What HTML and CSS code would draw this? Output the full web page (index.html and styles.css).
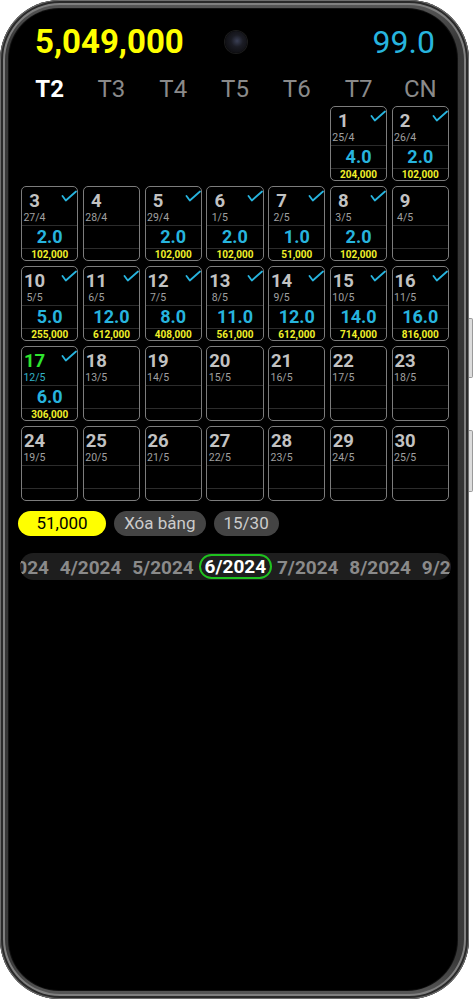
FILE: index.html
```html
<!DOCTYPE html>
<html lang="vi">
<head>
<meta charset="utf-8">
<title>Bảng công</title>
<link rel="stylesheet" href="styles.css">
</head>
<body>
<svg class="defs" width="0" height="0" aria-hidden="true">
  <symbol id="chk" viewBox="0 0 16 12"><path d="M1.5 6 L4.8 10.5 L15 1.5"/></symbol>
</svg>
<div class="phone">
  <div class="side side-vol"></div>
  <div class="side side-pwr"></div>
  <div class="screen">
    <div class="camera"></div>
    <div class="content">
      <div class="hdr">
        <span class="total">5,049,000</span>
        <span class="sum">99.0</span>
      </div>
      <div class="days">
        <div class="on">T2</div><div>T3</div><div>T4</div><div>T5</div><div>T6</div><div>T7</div><div>CN</div>
      </div>
      <div class="grid">
        <div class="cell c6"><div class="top"><div class="dl"><div class="dn">1</div><div class="dd">25/4</div></div><svg class="chk"><use href="#chk"/></svg></div><div class="val">4.0</div><div class="amt">204,000</div></div>
        <div class="cell"><div class="top"><div class="dl"><div class="dn">2</div><div class="dd">26/4</div></div><svg class="chk"><use href="#chk"/></svg></div><div class="val">2.0</div><div class="amt">102,000</div></div>

        <div class="cell"><div class="top"><div class="dl"><div class="dn">3</div><div class="dd">27/4</div></div><svg class="chk"><use href="#chk"/></svg></div><div class="val">2.0</div><div class="amt">102,000</div></div>
        <div class="cell"><div class="top"><div class="dl"><div class="dn">4</div><div class="dd">28/4</div></div></div><div class="val"></div><div class="amt"></div></div>
        <div class="cell"><div class="top"><div class="dl"><div class="dn">5</div><div class="dd">29/4</div></div><svg class="chk"><use href="#chk"/></svg></div><div class="val">2.0</div><div class="amt">102,000</div></div>
        <div class="cell"><div class="top"><div class="dl"><div class="dn">6</div><div class="dd">1/5</div></div><svg class="chk"><use href="#chk"/></svg></div><div class="val">2.0</div><div class="amt">102,000</div></div>
        <div class="cell"><div class="top"><div class="dl"><div class="dn">7</div><div class="dd">2/5</div></div><svg class="chk"><use href="#chk"/></svg></div><div class="val">1.0</div><div class="amt">51,000</div></div>
        <div class="cell"><div class="top"><div class="dl"><div class="dn">8</div><div class="dd">3/5</div></div><svg class="chk"><use href="#chk"/></svg></div><div class="val">2.0</div><div class="amt">102,000</div></div>
        <div class="cell"><div class="top"><div class="dl"><div class="dn">9</div><div class="dd">4/5</div></div></div><div class="val"></div><div class="amt"></div></div>

        <div class="cell"><div class="top"><div class="dl"><div class="dn">10</div><div class="dd">5/5</div></div><svg class="chk"><use href="#chk"/></svg></div><div class="val">5.0</div><div class="amt">255,000</div></div>
        <div class="cell"><div class="top"><div class="dl"><div class="dn">11</div><div class="dd">6/5</div></div><svg class="chk"><use href="#chk"/></svg></div><div class="val">12.0</div><div class="amt">612,000</div></div>
        <div class="cell"><div class="top"><div class="dl"><div class="dn">12</div><div class="dd">7/5</div></div><svg class="chk"><use href="#chk"/></svg></div><div class="val">8.0</div><div class="amt">408,000</div></div>
        <div class="cell"><div class="top"><div class="dl"><div class="dn">13</div><div class="dd">8/5</div></div><svg class="chk"><use href="#chk"/></svg></div><div class="val">11.0</div><div class="amt">561,000</div></div>
        <div class="cell"><div class="top"><div class="dl"><div class="dn">14</div><div class="dd">9/5</div></div><svg class="chk"><use href="#chk"/></svg></div><div class="val">12.0</div><div class="amt">612,000</div></div>
        <div class="cell"><div class="top"><div class="dl"><div class="dn">15</div><div class="dd">10/5</div></div><svg class="chk"><use href="#chk"/></svg></div><div class="val">14.0</div><div class="amt">714,000</div></div>
        <div class="cell"><div class="top"><div class="dl"><div class="dn">16</div><div class="dd">11/5</div></div><svg class="chk"><use href="#chk"/></svg></div><div class="val">16.0</div><div class="amt">816,000</div></div>

        <div class="cell today"><div class="top"><div class="dl"><div class="dn">17</div><div class="dd">12/5</div></div><svg class="chk"><use href="#chk"/></svg></div><div class="val">6.0</div><div class="amt">306,000</div></div>
        <div class="cell"><div class="top"><div class="dl"><div class="dn">18</div><div class="dd">13/5</div></div></div><div class="val"></div><div class="amt"></div></div>
        <div class="cell"><div class="top"><div class="dl"><div class="dn">19</div><div class="dd">14/5</div></div></div><div class="val"></div><div class="amt"></div></div>
        <div class="cell"><div class="top"><div class="dl"><div class="dn">20</div><div class="dd">15/5</div></div></div><div class="val"></div><div class="amt"></div></div>
        <div class="cell"><div class="top"><div class="dl"><div class="dn">21</div><div class="dd">16/5</div></div></div><div class="val"></div><div class="amt"></div></div>
        <div class="cell"><div class="top"><div class="dl"><div class="dn">22</div><div class="dd">17/5</div></div></div><div class="val"></div><div class="amt"></div></div>
        <div class="cell"><div class="top"><div class="dl"><div class="dn">23</div><div class="dd">18/5</div></div></div><div class="val"></div><div class="amt"></div></div>

        <div class="cell"><div class="top"><div class="dl"><div class="dn">24</div><div class="dd">19/5</div></div></div><div class="val"></div><div class="amt"></div></div>
        <div class="cell"><div class="top"><div class="dl"><div class="dn">25</div><div class="dd">20/5</div></div></div><div class="val"></div><div class="amt"></div></div>
        <div class="cell"><div class="top"><div class="dl"><div class="dn">26</div><div class="dd">21/5</div></div></div><div class="val"></div><div class="amt"></div></div>
        <div class="cell"><div class="top"><div class="dl"><div class="dn">27</div><div class="dd">22/5</div></div></div><div class="val"></div><div class="amt"></div></div>
        <div class="cell"><div class="top"><div class="dl"><div class="dn">28</div><div class="dd">23/5</div></div></div><div class="val"></div><div class="amt"></div></div>
        <div class="cell"><div class="top"><div class="dl"><div class="dn">29</div><div class="dd">24/5</div></div></div><div class="val"></div><div class="amt"></div></div>
        <div class="cell"><div class="top"><div class="dl"><div class="dn">30</div><div class="dd">25/5</div></div></div><div class="val"></div><div class="amt"></div></div>
      </div>
      <div class="actions">
        <span class="pill pill-rate">51,000</span>
        <span class="pill">Xóa bảng</span>
        <span class="pill">15/30</span>
      </div>
      <div class="months">
        <div class="track">
          <div class="m">3/2024</div>
          <div class="m">4/2024</div>
          <div class="m">5/2024</div>
          <div class="m sel">6/2024</div>
          <div class="m">7/2024</div>
          <div class="m">8/2024</div>
          <div class="m">9/2024</div>
        </div>
      </div>
    </div>
  </div>
</div>
</body>
</html>
```

FILE: styles.css
```css
html, body {
  margin: 0;
  padding: 0;
  background: #ffffff;
}
body {
  font-family: Roboto, "Liberation Sans", sans-serif;
  width: 473px;
  height: 1000px;
  overflow: hidden;
}
.defs {
  position: absolute;
  width: 0;
  height: 0;
}
.phone {
  position: relative;
  width: 469px;
  height: 999px;
  box-sizing: border-box;
  padding: 9px 12px 9px 9px;
  border-radius: 60px;
  background: linear-gradient(180deg, #5a5a5a 0%, #3a3a3a 4%, #333 50%, #3a3a3a 96%, #5a5a5a 100%);
  box-shadow: inset 0 0 0 1px #6e6e6e, inset 0 0 0 3px #2a2a2a, inset 0 0 0 5px #808080;
}
.side {
  position: absolute;
  right: -4px;
  width: 3px;
  background: #dcdcdc;
  border: 1px solid #9a9a9a;
  border-left: none;
  border-radius: 0 2px 2px 0;
}
.side-vol {
  top: 318px;
  height: 58px;
}
.side-pwr {
  top: 430px;
  height: 60px;
}
.screen {
  position: relative;
  height: 100%;
  background: #000;
  border-radius: 50px;
  overflow: hidden;
  box-shadow: 0 0 0 1px #111;
}
.camera {
  position: absolute;
  left: 216px;
  top: 22px;
  width: 22px;
  height: 22px;
  border-radius: 50%;
  background: radial-gradient(circle at 55% 45%, #3a3f55 0, #1b1c24 35%, #101014 70%);
  box-shadow: 0 0 0 1px #1c1c1c;
}
.content {
  margin-left: 12px;
  width: 428px;
  padding-top: 13px;
}
.hdr {
  display: flex;
  justify-content: space-between;
  align-items: baseline;
  height: 40px;
  line-height: 40px;
  padding: 0 14px;
}
.total {
  font-size: 33px;
  font-weight: 700;
  color: #ffff00;
}
.sum {
  font-size: 32px;
  color: #27b4de;
}
.days {
  display: grid;
  grid-template-columns: repeat(7, 1fr);
  column-gap: 4.4px;
  margin-top: 12.5px;
  font-size: 24px;
  line-height: 28px;
  color: #8a8a8a;
  text-align: center;
}
.days .on {
  color: #ffffff;
  font-weight: 700;
}
.grid {
  display: grid;
  grid-template-columns: repeat(7, 1fr);
  grid-auto-rows: 75px;
  column-gap: 4.4px;
  row-gap: 5px;
  margin-top: 3.5px;
}
.cell {
  display: flex;
  flex-direction: column;
  box-sizing: border-box;
  border: 1px solid #7c7c7c;
  border-radius: 5px;
  overflow: hidden;
}
.c6 {
  grid-column-start: 6;
}
.top {
  height: 38px;
  box-sizing: border-box;
  padding-top: 4px;
  display: flex;
  justify-content: space-between;
  align-items: flex-start;
}
.dl {
  width: 25px;
  text-align: center;
}
.dn {
  font-size: 18.5px;
  line-height: 20px;
  font-weight: 700;
  color: #c2c2c2;
}
.dd {
  font-size: 10.5px;
  line-height: 14px;
  color: #a0a0a0;
}
.chk {
  width: 16px;
  height: 12px;
  margin-top: -1px;
  fill: none;
  stroke: #27b4de;
  stroke-width: 1.8;
  stroke-linecap: round;
  stroke-linejoin: round;
}
.val {
  height: 22px;
  border-top: 1px solid #2c2c2c;
  text-align: center;
  font-size: 18px;
  line-height: 22px;
  font-weight: 700;
  color: #27b4de;
}
.amt {
  height: 11px;
  border-top: 1px solid #2c2c2c;
  text-align: center;
  font-size: 10px;
  line-height: 11px;
  font-weight: 700;
  color: #f0f02a;
}
.today .dn {
  color: #2ee52e;
}
.today .dd {
  color: #33b3c9;
}
.actions {
  display: flex;
  gap: 8px;
  margin-top: 10px;
  margin-left: -3px;
}
.pill {
  height: 25px;
  line-height: 25px;
  padding: 0 10px;
  border-radius: 13px;
  background: #444444;
  color: #cccccc;
  font-size: 17px;
}
.pill-rate {
  background: #ffff00;
  color: #000;
  padding: 0 18.5px;
}
.months {
  margin-top: 17px;
  margin-left: -1px;
  width: 431px;
  height: 27px;
  border-radius: 14px;
  background: #1e1e1e;
  overflow: hidden;
}
.track {
  display: flex;
  margin-left: -38px;
}
.m {
  flex: 0 0 72.4px;
  box-sizing: border-box;
  height: 27px;
  padding-top: 2px;
  line-height: 25px;
  text-align: center;
  font-size: 19px;
  font-weight: 700;
  color: #8a8a8a;
  white-space: nowrap;
}
.m.sel {
  height: 25px;
  margin-top: 1px;
  padding-top: 1px;
  line-height: 20px;
  border: 2px solid #1fc21f;
  border-radius: 13px;
  color: #ffffff;
}
```
